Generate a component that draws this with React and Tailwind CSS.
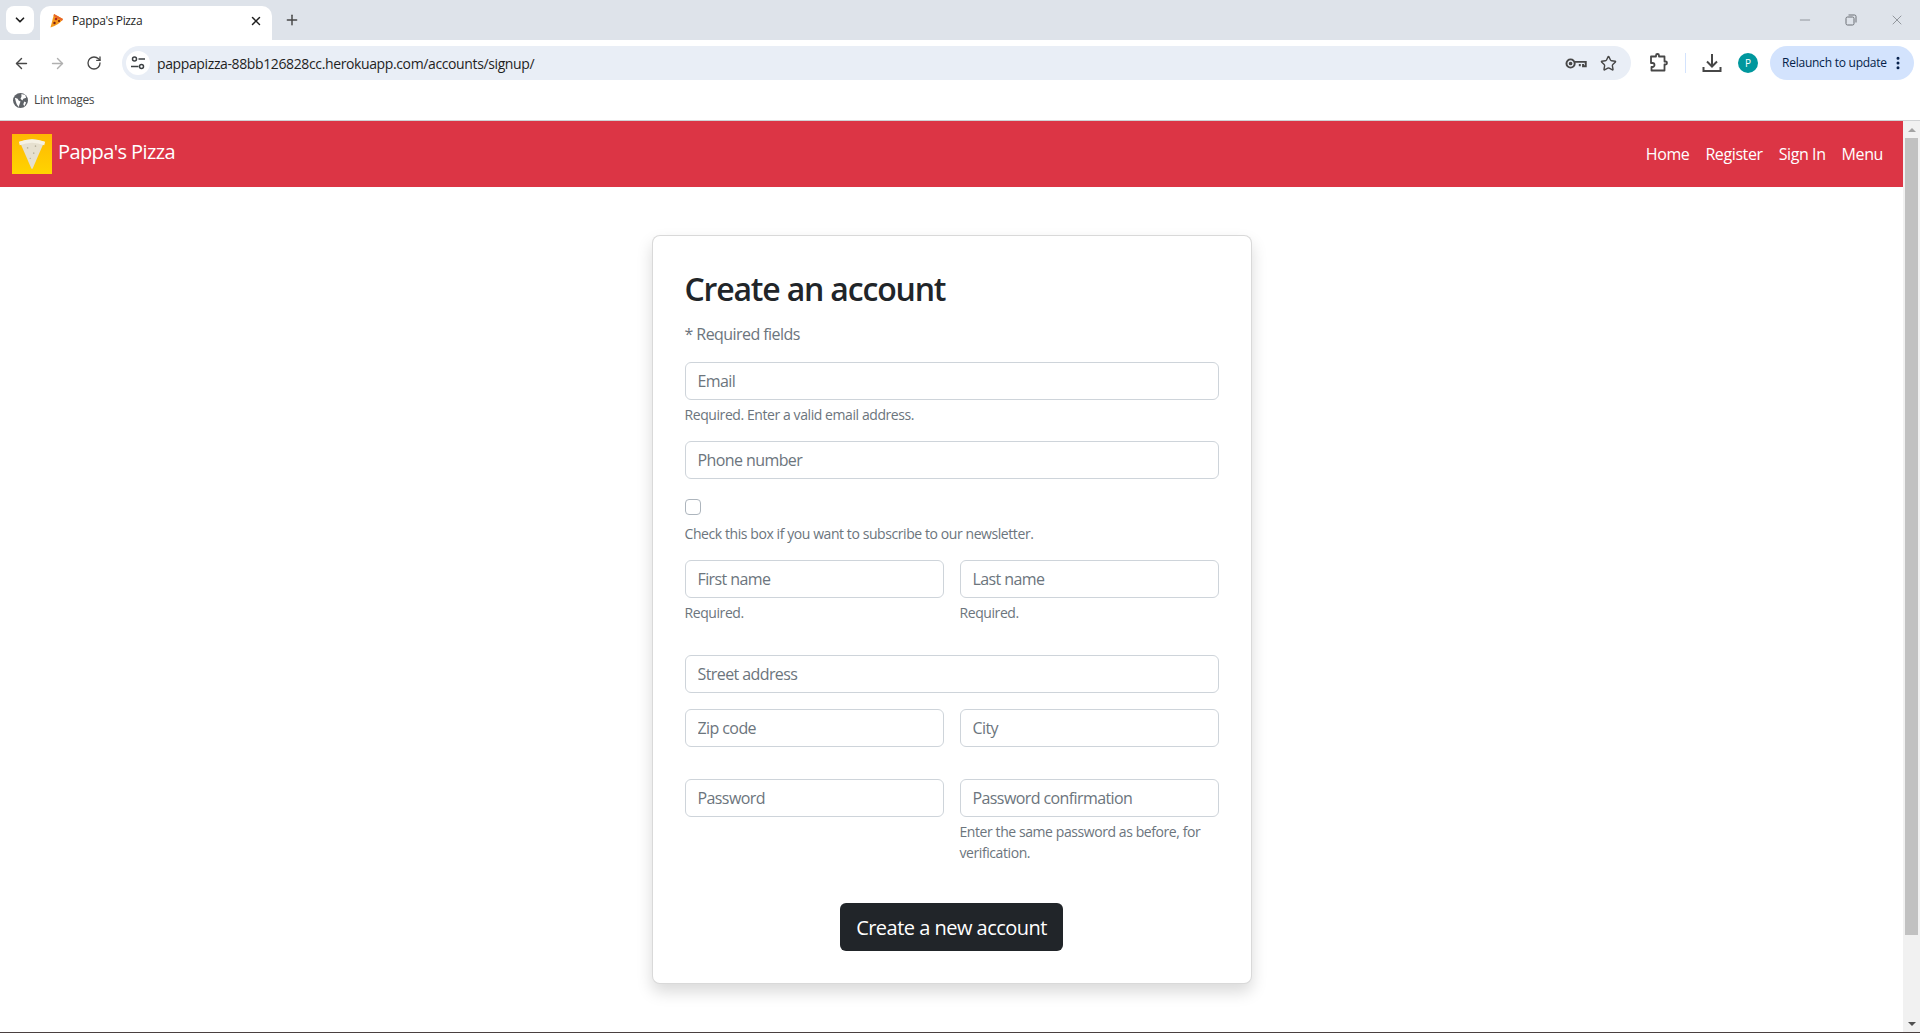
import { ArrowLeft, ArrowRight, ChevronDown, Minus, MoreVertical, Plus, RotateCw, Star, X } from 'lucide-react';

const Favicon = () => (
  <svg width="16" height="16" viewBox="0 0 16 16">
    <path d="M5 1 L14 6 Q10 12 1.5 14.5 Z" fill="#f59a1b" />
    <path d="M5 1 L14 6 L13 8 L4.6 3 Z" fill="#e8662a" />
    <circle cx="7" cy="6" r="1.3" fill="#b3261e" />
    <circle cx="10" cy="8" r="1.1" fill="#7a1d12" />
    <circle cx="5.5" cy="10" r="1.2" fill="#7a1d12" />
  </svg>
);

const Logo = () => (
  <div className="w-10 h-10 bg-gradient-to-b from-[#ffb703] to-[#ffd400] flex items-center justify-center shrink-0">
    <svg width="28" height="34" viewBox="0 0 32 38">
      <path d="M2 5 Q16 -1 30 5 L17 35 Q16 37 15 35 Z" fill="#e6e0cf" />
      <path d="M1 5 Q16 -1 31 5 L30 9 Q16 3 2 9 Z" fill="#f5f1e4" />
      <circle cx="11" cy="12" r="0.9" fill="#b5af9b" />
      <circle cx="20" cy="10" r="0.9" fill="#b5af9b" />
      <circle cx="18" cy="18" r="0.9" fill="#b5af9b" />
      <circle cx="14" cy="24" r="0.8" fill="#b5af9b" />
    </svg>
  </div>
);

const Tune = () => (
  <svg width="16" height="16" viewBox="0 0 16 16" fill="none" stroke="#3c4043" strokeWidth="1.5">
    <circle cx="4.5" cy="4" r="2" />
    <path d="M8.5 4H15M1 11.5h7.5" />
    <circle cx="11.5" cy="11.5" r="2" />
  </svg>
);

const KeyIcon = () => (
  <svg width="22" height="13" viewBox="0 0 20 12" fill="none" stroke="#474747" strokeWidth="1.8">
    <circle cx="5" cy="6" r="3.8" />
    <circle cx="5" cy="6" r="0.8" fill="#474747" />
    <path d="M9 4.5h10v4h-2.5v-2M13.5 6.5v2" />
  </svg>
);

const PuzzleIcon = () => (
  <svg width="20" height="20" viewBox="0 0 20 20" fill="none" stroke="#474747" strokeWidth="1.8" strokeLinejoin="round">
    <path d="M2 3.5h5V2.5a1.5 1.5 0 0 1 3 0v1h5.5v5h1a1.5 1.5 0 0 1 0 3h-1v6H2.5v-3.5h1a2 2 0 0 0 0-4h-1.5Z" />
  </svg>
);

const DownloadIcon = () => (
  <svg width="20" height="20" viewBox="0 0 20 20" fill="none" stroke="#474747" strokeWidth="2">
    <path d="M10 1v12M5 8.5l5 5 5-5M1.5 14v4h17v-4" />
  </svg>
);

const Globe = () => (
  <svg width="15" height="15" viewBox="0 0 16 16">
    <circle cx="8" cy="8" r="8" fill="#5f6368" />
    <path d="M2 5l3 1 1 2 2 1-1 3-1 3-2-3-1-3zM9 1l4 1 1 3-3 1-1 2-2-2 1-2zM12 9l2 1-2 4-1-2z" fill="#fff" />
  </svg>
);

const Help = ({ children, className = 'mt-1' }) => (
  <p className={`${className} text-[14px] leading-[21px] text-[#6c757d] tracking-[-0.03em]`}>{children}</p>
);

const Field = ({ placeholder, help, className = '' }) => (
  <div className={`mb-4 ${className}`}>
    <input
      placeholder={placeholder}
      className="block w-full h-[38px] px-3 rounded-[6px] border border-[#ced4da] bg-white text-[16px] tracking-[-0.037em] placeholder:text-[#6c757d] outline-none"
    />
    {help && <Help>{help}</Help>}
  </div>
);

export default function App() {
  return (
    <div className="h-[1033px] overflow-hidden flex flex-col bg-white font-['Open_Sans',sans-serif] text-[#212529]">
      {/* tab strip */}
      <div className="h-10 shrink-0 bg-[#dee3ea] flex items-end pl-[6px]">
        <div className="w-7 h-7 mb-[6px] rounded-lg bg-white flex items-center justify-center">
          <ChevronDown size={14} strokeWidth={3} color="#1f1f1f" />
        </div>
        <div className="ml-[6px] w-[232px] h-[34px] bg-white rounded-t-[10px] flex items-center pl-[9px] pr-[9px] pb-1">
          <Favicon />
          <span className="ml-[7px] flex-1 text-[12px] tracking-[-0.03em] text-[#1f1f1f]">Pappa's Pizza</span>
          <X size={14} strokeWidth={2.5} color="#1f1f1f" />
        </div>
        <Plus size={16} strokeWidth={2.2} color="#474747" className="ml-3 mb-3" />
        <div className="ml-auto flex items-center gap-8 mb-3 pr-[15px] text-[#6b6f75]">
          <Minus size={16} strokeWidth={1} />
          <svg width="12" height="12" viewBox="0 0 12 12" fill="none" stroke="currentColor">
            <rect x="1" y="3" width="8" height="8" rx="1.5" />
            <path d="M3.5 1h6a1.5 1.5 0 0 1 1.5 1.5v6" />
          </svg>
          <X size={16} strokeWidth={1} />
        </div>
      </div>

      {/* toolbar */}
      <div className="h-[41px] shrink-0 bg-white flex items-start pt-[6px] pl-[13px] pr-[6px]">
        <div className="flex items-center gap-[19px] h-[34px]">
          <ArrowLeft size={17} strokeWidth={2} color="#474747" />
          <ArrowRight size={17} strokeWidth={2} color="#b0b0b0" />
          <RotateCw size={16} strokeWidth={2} color="#474747" className="ml-[1px]" />
        </div>
        <div className="ml-[20px] w-[1510px] h-[34px] rounded-full bg-[#e9eef6] flex items-center pl-1 pr-[14px]">
          <div className="w-6 h-6 rounded-full bg-white flex items-center justify-center shrink-0">
            <Tune />
          </div>
          <span className="ml-[7px] flex-1 text-[14px] tracking-[-0.027em] text-[#1f1f1f]">pappapizza-88bb126828cc.herokuapp.com/accounts/signup/</span>
          <KeyIcon />
          <Star size={17} strokeWidth={2} color="#474747" className="ml-[13px]" />
        </div>
        <div className="flex items-center h-[34px]">
          <div className="ml-[18px]"><PuzzleIcon /></div>
          <div className="ml-4 w-px h-5 bg-[#d3e3fd]" />
          <div className="ml-4"><DownloadIcon /></div>
          <div className="ml-[16px] w-5 h-5 rounded-full bg-[#00979d] flex items-center justify-center text-[10px] text-white">P</div>
          <div className="ml-[12px] w-[144px] h-[34px] rounded-full bg-[#d3e3fd] flex items-center pl-3 pr-2">
            <span className="flex-1 text-[12px] tracking-[-0.02em] text-[#041e49]">Relaunch to update</span>
            <MoreVertical size={16} strokeWidth={2.5} color="#041e49" />
          </div>
        </div>
      </div>

      {/* bookmarks */}
      <div className="h-10 shrink-0 bg-white border-b border-[#d0d2d4] flex items-center pl-[13px]">
        <Globe />
        <span className="ml-[6px] text-[12px] tracking-[-0.03em] text-[#474747] -mt-[1px]">Lint Images</span>
      </div>

      {/* page viewport */}
      <div className="flex-1 min-h-0 flex border-b border-[#4a4040]">
        <div className="flex-1 min-w-0 overflow-hidden">
          <nav className="h-[66px] bg-[#dc3545] flex items-center justify-between pl-3 pr-3 text-white">
            <div className="flex items-center gap-[6px] -mt-[1px]">
              <Logo />
              <span className="text-[20px] tracking-[-0.03em] -mt-[3px]">Pappa's Pizza</span>
            </div>
            <div className="flex items-center text-[16px] tracking-[-0.025em]">
              <a className="px-2">Home</a>
              <a className="px-2">Register</a>
              <a className="px-2">Sign In</a>
              <a className="px-2">Menu</a>
            </div>
          </nav>
          <main className="pt-[48px] flex justify-center">
            <div className="w-[600px] bg-white border border-black/15 rounded-lg shadow-[0_8px_16px_rgba(0,0,0,0.15)] p-8">
              <h1 className="text-[32px] leading-[42px] font-[550] tracking-[-0.037em] mb-[12.4px]">Create an account</h1>
              <p className="text-[16px] leading-6 text-[#6c757d] tracking-[-0.035em] mb-4">* Required fields</p>
              <Field placeholder="Email" help="Required. Enter a valid email address." />
              <Field placeholder="Phone number" />
              <div className="mb-4 pt-1">
                <div className="h-4 flex">
                  <input type="checkbox" className="appearance-none w-4 h-4 rounded-[4px] border border-[#adb5bd] bg-white" />
                </div>
                <Help className="mt-2">Check this box if you want to subscribe to our newsletter.</Help>
              </div>
              <div className="grid grid-cols-2 gap-x-4 pb-4">
                <Field placeholder="First name" help="Required." />
                <Field placeholder="Last name" help="Required." />
              </div>
              <Field placeholder="Street address" />
              <div className="grid grid-cols-2 gap-x-4 pb-4">
                <Field placeholder="Zip code" />
                <Field placeholder="City" />
              </div>
              <div className="grid grid-cols-2 gap-x-4">
                <Field placeholder="Password" />
                <Field placeholder="Password confirmation" help="Enter the same password as before, for verification." />
              </div>
              <div className="flex justify-center pt-6">
                <button className="h-12 px-4 pt-[2px] rounded-[6px] bg-[#212529] text-white text-[20px] tracking-[-0.026em]">Create a new account</button>
              </div>
            </div>
          </main>
        </div>
        {/* scrollbar */}
        <div className="w-[17px] shrink-0 bg-[#f1f1f1] flex flex-col items-center">
          <div className="h-[17px] flex items-center justify-center">
            <div className="w-0 h-0 border-x-[4px] border-x-transparent border-b-[4px] border-b-[#a3a3a3]" />
          </div>
          <div className="w-[13px] h-[797px] bg-[#c1c1c1]" />
          <div className="mt-auto h-[17px] flex items-center justify-center">
            <div className="w-0 h-0 border-x-[4px] border-x-transparent border-t-[4px] border-t-[#505050]" />
          </div>
        </div>
      </div>
    </div>
  );
}
